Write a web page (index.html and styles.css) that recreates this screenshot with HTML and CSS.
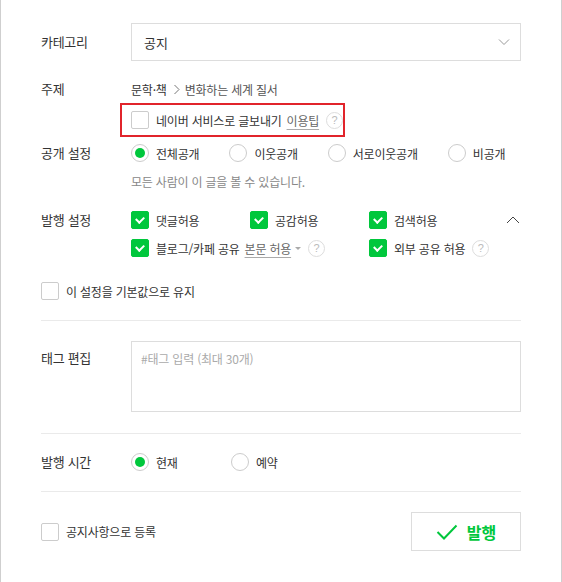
FILE: index.html
```html
<!DOCTYPE html>
<html lang="ko">
<head>
<meta charset="utf-8">
<title>발행</title>
<link rel="stylesheet" href="styles.css">
</head>
<body>
<div class="panel">
  <div class="row row-category">
    <div class="label label-tall">카테고리</div>
    <div class="select">
      <span>공지</span>
      <svg class="chev" width="12" height="8" viewBox="0 0 12 8"><polyline points="1,1.5 6,6.5 11,1.5" fill="none" stroke="#999" stroke-width="1"/></svg>
    </div>
  </div>

  <div class="row row-subject">
    <div class="label">주제</div>
    <div class="content">
      <div class="subject"><span class="subject-main">문학·책</span><svg class="gt" width="8" height="11" viewBox="0 0 8 11"><polyline points="1.5,1 6,5.5 1.5,10" fill="none" stroke="#777" stroke-width="1"/></svg><span class="subject-sub">변화하는 세계 질서</span></div>
      <div class="highlight">
        <span class="cb"></span>
        <span class="opt-text">네이버 서비스로 글보내기</span>
        <span class="link">이용팁</span>
        <span class="help">?</span>
      </div>
    </div>
  </div>

  <div class="row row-public">
    <div class="label">공개 설정</div>
    <div class="content">
      <div class="radios">
        <span class="opt"><span class="radio on"></span><span class="opt-text">전체공개</span></span>
        <span class="opt"><span class="radio"></span><span class="opt-text">이웃공개</span></span>
        <span class="opt"><span class="radio"></span><span class="opt-text">서로이웃공개</span></span>
        <span class="opt"><span class="radio"></span><span class="opt-text">비공개</span></span>
      </div>
      <div class="desc">모든 사람이 이 글을 볼 수 있습니다.</div>
    </div>
  </div>

  <div class="row row-publish">
    <div class="label">발행 설정</div>
    <div class="content">
      <div class="checks">
        <span class="opt col"><span class="cb on"></span><span class="opt-text">댓글허용</span></span>
        <span class="opt col"><span class="cb on"></span><span class="opt-text">공감허용</span></span>
        <span class="opt col"><span class="cb on"></span><span class="opt-text">검색허용</span></span>
        <svg class="chev-up" width="14" height="8" viewBox="0 0 14 8"><polyline points="1,7 7,1 13,7" fill="none" stroke="#444" stroke-width="1"/></svg>
      </div>
      <div class="checks checks-2">
        <span class="opt col2"><span class="cb on"></span><span class="opt-text">블로그/카페 공유</span><span class="link link-drop">본문 허용<span class="caret"></span></span><span class="help">?</span></span>
        <span class="opt"><span class="cb on"></span><span class="opt-text">외부 공유 허용</span><span class="help">?</span></span>
      </div>
    </div>
  </div>

  <div class="opt keep"><span class="cb"></span><span class="opt-text">이 설정을 기본값으로 유지</span></div>

  <div class="divider"></div>

  <div class="row row-tag">
    <div class="label label-tag">태그 편집</div>
    <div class="tagbox">#태그 입력 (최대 30개)</div>
  </div>

  <div class="divider divider-2"></div>

  <div class="row row-time">
    <div class="label">발행 시간</div>
    <div class="radios">
      <span class="opt opt-now"><span class="radio on"></span><span class="opt-text">현재</span></span>
      <span class="opt"><span class="radio"></span><span class="opt-text">예약</span></span>
    </div>
  </div>

  <div class="divider divider-3"></div>

  <div class="bottom">
    <div class="opt"><span class="cb"></span><span class="opt-text">공지사항으로 등록</span></div>
    <button class="publish"><svg width="22" height="16" viewBox="0 0 22 16"><polyline points="1.5,8 8,14.5 20.5,1.5" fill="none" stroke="#00c73c" stroke-width="2"/></svg><span>발행</span></button>
  </div>
</div>
</body>
</html>
```

FILE: styles.css
```css
html, body {
  margin: 0;
  padding: 0;
  background: #fff;
}
body {
  font-family: "Noto Sans CJK KR", "Noto Sans", sans-serif;
  color: #333;
}
.panel {
  width: 480px;
  min-height: 582px;
  border-left: 1px solid #cfcfcf;
  border-right: 1px solid #cfcfcf;
  padding: 23px 40px 0 40px;
  box-sizing: content-box;
}
.row {
  display: flex;
  align-items: flex-start;
}
.label {
  width: 90px;
  flex-shrink: 0;
  font-size: 13px;
  line-height: 20px;
  color: #333;
  letter-spacing: -0.3px;
}
.label-tall {
  line-height: 38px;
}
.content {
  flex: 1;
}
.select {
  flex: 1;
  height: 38px;
  border: 1px solid #ddd;
  box-sizing: border-box;
  display: flex;
  align-items: center;
  justify-content: space-between;
  padding: 0 10px 0 12px;
  font-size: 13px;
  color: #333;
}
.row-subject {
  margin-top: 18px;
}
.subject {
  display: flex;
  align-items: center;
  height: 20px;
  font-size: 12px;
  letter-spacing: -0.2px;
}
.subject-main {
  color: #333;
}
.gt {
  margin: 0 4px 0 6px;
}
.subject-sub {
  color: #555;
}
.highlight {
  display: flex;
  align-items: center;
  width: 225px;
  height: 34px;
  box-sizing: border-box;
  border: 2px solid #e1242b;
  margin: 4px 0 0 -11px;
  padding-left: 9px;
}
.opt {
  display: inline-flex;
  align-items: center;
  height: 20px;
}
.opt-text {
  font-size: 12px;
  color: #333;
  margin-left: 7px;
  letter-spacing: -0.2px;
  white-space: nowrap;
}
.cb {
  width: 18px;
  height: 18px;
  box-sizing: border-box;
  border: 1px solid #ccc;
  border-radius: 2px;
  background: #fff;
  flex-shrink: 0;
  position: relative;
}
.cb.on {
  background: #00c73c;
  border-color: #00c73c;
}
.cb.on::after {
  content: "";
  position: absolute;
  width: 6px;
  height: 4px;
  border-left: 2px solid #fff;
  border-bottom: 2px solid #fff;
  transform: rotate(-45deg);
  transform-origin: center;
  top: 4px;
  left: 4px;
}
.radio {
  width: 18px;
  height: 18px;
  box-sizing: border-box;
  border: 1px solid #ccc;
  border-radius: 50%;
  flex-shrink: 0;
  position: relative;
  background: #fff;
}
.radio.on::after {
  content: "";
  position: absolute;
  left: 3px;
  top: 3px;
  width: 10px;
  height: 10px;
  border-radius: 50%;
  background: #00c73c;
}
.link {
  font-size: 12px;
  color: #666;
  margin-left: 5px;
  text-decoration: underline;
  text-decoration-color: #aaa;
  text-underline-offset: 3px;
  letter-spacing: -0.2px;
  white-space: nowrap;
}
.help {
  width: 17px;
  height: 17px;
  box-sizing: border-box;
  border: 1px solid #ddd;
  border-radius: 50%;
  color: #bbb;
  font-size: 11px;
  line-height: 15px;
  text-align: center;
  margin-left: 7px;
  flex-shrink: 0;
  font-family: "Liberation Sans", sans-serif;
}
.row-public {
  margin-top: 6px;
}
.radios {
  display: flex;
  align-items: center;
  gap: 30px;
}
.desc {
  margin-top: 9px;
  font-size: 12px;
  line-height: 20px;
  color: #888;
  letter-spacing: -0.2px;
}
.row-publish {
  margin-top: 18px;
}
.checks {
  display: flex;
  align-items: center;
  position: relative;
}
.checks-2 {
  margin-top: 8px;
}
.col {
  width: 119px;
}
.col2 {
  width: 238px;
}
.chev-up {
  margin-left: auto;
  margin-right: 1px;
}
.link-drop {
  display: inline-flex;
  align-items: center;
}
.caret {
  width: 0;
  height: 0;
  border-left: 3px solid transparent;
  border-right: 3px solid transparent;
  border-top: 3px solid #aaa;
  margin-left: 4px;
}
.keep {
  display: flex;
  margin-top: 23px;
}
.divider {
  height: 1px;
  background: #eaeaea;
  margin-top: 19px;
}
.row-tag {
  margin-top: 20px;
}
.label-tag {
  padding-top: 7px;
}
.tagbox {
  flex: 1;
  height: 71px;
  border: 1px solid #ddd;
  box-sizing: border-box;
  padding: 7px 9px;
  font-size: 12px;
  line-height: 20px;
  color: #aaa;
  letter-spacing: -0.2px;
}
.divider-2 {
  margin-top: 21px;
}
.row-time {
  margin-top: 18px;
}
.opt-now {
  width: 70px;
}
.divider-3 {
  margin-top: 19px;
}
.bottom {
  display: flex;
  align-items: center;
  justify-content: space-between;
  margin-top: 20px;
}
.publish {
  width: 110px;
  height: 39px;
  border: 1px solid #ddd;
  background: #fff;
  display: flex;
  align-items: center;
  justify-content: center;
  padding: 0;
  font-family: "Noto Sans CJK KR", sans-serif;
  font-size: 16px;
  font-weight: bold;
  color: #00c73c;
}
.publish span {
  margin-left: 9px;
}
```
